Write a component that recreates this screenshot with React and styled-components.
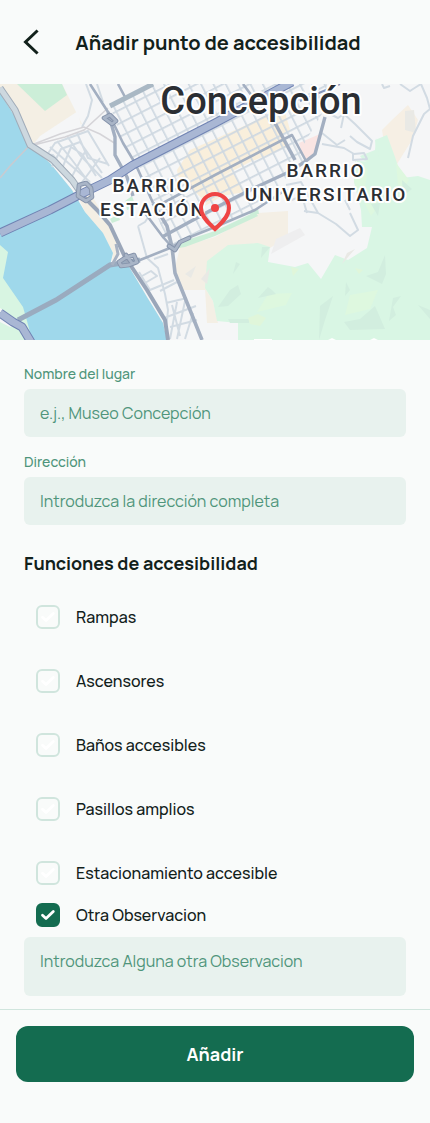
import React from 'react';
import styled, { createGlobalStyle } from 'styled-components';

const GlobalStyle = createGlobalStyle`
  *, *::before, *::after { box-sizing: border-box; }
  body {
    margin: 0;
    background: #f9fbfa;
    color: #12211b;
    font-family: Manrope, Inter, "Liberation Sans", sans-serif;
  }
`;

const Page = styled.form`
  display: flex;
  flex-direction: column;
  min-height: 100vh;
`;

const Header = styled.header`
  display: grid;
  grid-template-columns: 40px 1fr 40px;
  align-items: center;
  height: 84px;
  padding: 2px 6px 0 12px;
`;

const BackButton = styled.button`
  display: grid;
  place-items: center;
  width: 40px;
  height: 40px;
  padding: 0;
  border: 0;
  background: none;
  color: inherit;
`;

const Title = styled.h1`
  margin: 0;
  font-size: 20px;
  line-height: 28px;
  font-weight: 700;
  text-align: center;
  white-space: nowrap;
`;

const MapArea = styled.section`
  position: relative;
  height: 256px;
  overflow: hidden;
`;

const MapDrawing = styled.svg`
  display: block;
  width: 100%;
  height: 100%;
`;

const Pin = styled.svg`
  position: absolute;
  inset: 0;
  margin: auto;
`;

const MapText = styled.text`
  font-family: Roboto, sans-serif;
  font-size: ${(p) => (p.$city ? 38 : 19)}px;
  font-weight: 500;
  letter-spacing: ${(p) => (p.$city ? 0 : 2)}px;
  text-anchor: middle;
  fill: #2b2e33;
  stroke: #ffffff;
  stroke-width: 4px;
  stroke-linejoin: round;
  paint-order: stroke;
`;

const Content = styled.main`
  display: flex;
  flex-direction: column;
  padding: 24px 24px 13px;
`;

const Fields = styled.div`
  display: flex;
  flex-direction: column;
  gap: 15px;
`;

const Field = styled.div`
  display: flex;
  flex-direction: column;
  gap: 5px;
`;

const FieldLabel = styled.label`
  font-size: 14px;
  line-height: 20px;
  color: #4f957b;
  font-weight: 500;
`;

const TextInput = styled.input`
  width: 100%;
  height: 48px;
  padding: 0 16px;
  border: 0;
  border-radius: 6px;
  background: #e8f2ee;
  color: #12211b;
  font: inherit;
  font-size: 16px;
  font-weight: 400;
  &::placeholder { color: #4f957b; opacity: 1; }
`;

const NoteInput = styled(TextInput)`
  display: block;
  height: 59px;
  margin-top: 10px;
  padding: 12px 16px;
  line-height: 24px;
  resize: none;
`;

const SectionTitle = styled.h2`
  margin: 24px 0 28px;
  font-size: 18px;
  line-height: 28px;
  font-weight: 700;
`;

const Options = styled.div`
  display: flex;
  flex-direction: column;
  gap: 40px;
  margin-bottom: 18px;
`;

const Option = styled.label`
  display: flex;
  align-items: center;
  gap: 16px;
  padding: 0 12px;
  font-size: 16px;
  line-height: 24px;
  font-weight: 500;
`;

const CheckFrame = styled.span`
  display: grid;
  width: 24px;
  height: 24px;
  > * { grid-area: 1 / 1; }
`;

const CheckInput = styled.input`
  appearance: none;
  width: 24px;
  height: 24px;
  margin: 0;
  border: 2px solid #d0e5dd;
  border-radius: 6px;
  &:checked { background: #146c50; border-color: #146c50; }
`;

const CheckMark = styled.svg`
  pointer-events: none;
  z-index: 1;
`;

const Footer = styled.footer`
  padding: 16px;
  border-top: 1px solid #d0e5dd;
`;

const SubmitButton = styled.button`
  display: block;
  width: 100%;
  height: 56px;
  border: 0;
  border-radius: 12px;
  background: #146c50;
  color: #ffffff;
  font: inherit;
  font-size: 18px;
  font-weight: 700;
`;

const features = ['Rampas', 'Ascensores', 'Baños accesibles', 'Pasillos amplios', 'Estacionamiento accesible'];

function CheckOption({ label, checked }) {
  return (
    <Option>
      <CheckFrame>
        <CheckInput type="checkbox" defaultChecked={checked} />
        <CheckMark width="24" height="24" viewBox="0 0 24 24" fill="none" aria-hidden="true">
          <path d="M6.5 12.3 10 15.5 17.3 8.4" stroke="#fff" strokeWidth="2.8" strokeLinecap="round" strokeLinejoin="round" />
        </CheckMark>
      </CheckFrame>
      {label}
    </Option>
  );
}

function CityMap() {
  return (
    <MapDrawing viewBox="0 0 430 256" preserveAspectRatio="xMidYMid slice" role="img" aria-label="Mapa de Concepción">
      <defs>
        <pattern id="blocks" width="11" height="12" patternUnits="userSpaceOnUse" patternTransform="translate(4 3) rotate(-27)">
          <path d="M0 0H11M0 0V12" stroke="#ced8e1" strokeWidth="3.4" />
        </pattern>
      </defs>
      <rect width="430" height="256" fill="#f5f6f7" />

      {/* river, banks and parks */}
      <path d="M0 0H62L82 40 62 47 40 55 32 64 50 79 72 106 85 128 103 149 113 169 110 181 128 181 147 213 163 239 167 256H0Z" fill="#f4efe4" />
      <path d="M78 27 81 42 122 60 127 90 110 96 82 110 72 96 53 76 32 62 40 52Z" fill="#f5f6f7" />
      <path d="M84 105 92 112 116 152 119 170 112 181 113 169 103 149 85 128 78 112Z" fill="#f4efe4" />
      <path d="M17 0H62L67 11 45 27Z" fill="#cceed8" />
      <path d="M0 9 17 36 32 64 50 79 72 106 85 128 103 149 113 169 110 181 128 181 147 213 163 239 167 256H0Z" fill="#9fd8eb" />
      <path d="M0 161 8 168 3 194 23 223 27 237 32 256H0Z" fill="#d8f5e2" />
      <path d="M0 224 22 239 10 243 0 238Z" fill="#f5f6f7" />
      <path d="M177 86 190 66 215 55 255 37 262 33 285 28 290 46 281 52 287 63 250 78 215 96 208 120 178 92Z" fill="#f9efdc" />
      <path d="M215 96 232 88 245 108 222 112 205 122Z" fill="#f9efdc" />
      <path d="M299 59 320 50 315 72 304 76Z" fill="#fae5e3" />
      <path d="M180 163 215 153 258 129 288 127 288 153 270 164 228 165 207 206 182 206 174 188Z" fill="#f4efe5" />
      <path d="M205 204 213 217 218 239 207 239Z" fill="#f4efe5" />
      <path d="M382 46 392 36 408 21 418 36 412 56 397 80 387 76Z" fill="#f6efe4" />
      <path d="M125 117 132 112 136 123 127 126ZM110 135 118 130 120 136 112 139ZM172 165 190 155 215 147 255 128 258 132 215 152 185 163ZM246 130 258 124 259 130Z" fill="#cceed8" />
      <path d="M207 177 228 161 258 159 270 163 268 178 295 183 308 179 321 195 335 171 348 176 367 164 372 143 362 143 361 126 354 98 357 77 378 78 375 56 387 51 395 73 402 94 418 92 430 96V256H238V239L217 237 213 217 205 204Z" fill="#d9f6e4" />
      <path d="M376 54 381 85 363 76 360 72 375 66Z" fill="#d9f6e4" />
      <path d="M276 155 300 144 305 151 271 170Z" fill="#eeeeef" />
      <path d="M355 77 368 85 365 103 382 117 371 132 354 98ZM396 79 409 96 399 112ZM268 210 292 209 286 221 257 228ZM350 211 378 206 370 225 345 231Z" fill="#def8df" />
      <path d="M238 201 241 210 228 222 218 223 230 206ZM320 222 333 212 325 236 319 256ZM375 222 385 245 350 246 344 238 360 235ZM385 171 386 190 382 200 366 192 378 188ZM401 212 393 223 396 231 389 237 393 214ZM272 206 276 210 258 214 268 203ZM236 178 240 180 233 190ZM262 163 270 163 261 174ZM346 198 350 206 345 212ZM228 235 249 235 249 239 230 239ZM402 96 412 105 403 112ZM418 221 430 226V235ZM371 120 380 119 378 132Z" fill="#d2eedf" />
      <path d="M185 190 196 182 191 194ZM201 195 210 184 207 200ZM355 165 342 180 347 169ZM405 27 414 26 416 49 405 46Z" fill="#e9e9e5" />
      <path d="M248 234 258 230 266 234 260 242 250 240ZM291 183 299 185 293 192ZM355 184 363 186 359 190Z" fill="#e0f6da" />

      {/* street blocks */}
      <path d="M110 22 153 0H327L323 28 304 60 299 59 304 76 287 93 255 126 215 143 190 153 172 164 164 151 153 119 139 82 123 59Z" fill="url(#blocks)" />
      <g fill="none" stroke="#d2dbe3" strokeWidth="2" strokeLinejoin="round">
        <path d="M45 74 55 59 88 47 109 82M52 83 61 65 80 58 102 89M61 87 71 63 82 70 96 92M69 98 86 66M77 105 100 74M50 63 90 98M57 57 72 76 91 101M43 70 53 71 79 104M67 52 80 71 102 94M77 49 88 74 108 80" />
        <path d="M86 0 92 16 88 32 82 43M97 0 103 18" />
        <path d="M138 142 147 174 158 184 165 210 168 226 166 246M139 188 150 206 174 196M142 192 151 187 157 192 145 199M138 142 145 138 151 129M154 175 168 170M160 207 177 198M166 219 187 214M164 234 196 222M170 243 197 236M177 218 170 255M185 217 177 255M193 229 185 255M172 221 180 252" />
        <path d="M304 127 318 129 336 140 350 152 358 146 350 129M350 126 345 116M322 60 344 64 354 70 364 69 367 75 353 76 353 69M341 44 344 30 355 40 372 57 370 65 357 58 350 52M328 29 338 34 344 30M322 49 337 61 345 56M382 0 384 4 390 2M400 0 410 7 413 5 421 0 427 14 430 25 424 30 413 52 408 74" />
        <path d="M286 101 301 98 308 111 318 129M289 117 302 112 307 129" />
      </g>
      <path d="M34 60 60 50 84 43 100 50 116 60M34 61 65 53 84 46 108 24" fill="none" stroke="#d5d4d8" strokeWidth="1.5" />
      <path d="M0 94 10 82 30 61" fill="none" stroke="#c8cbd1" strokeWidth="1.6" />

      {/* avenues */}
      <g fill="none" stroke="#a3afc1" strokeWidth="2.6" strokeLinejoin="round">
        <path d="M90 0 108 28 123 59 135 79 153 119M145 129 163 153 172 163" />
        <path d="M153 119 167 142 172 163 175 189 190 226 202 256" strokeWidth="3.6" />
        <path d="M108 28 115 53 115 71 127 93 133 112" strokeWidth="3.4" />
        <path d="M118 0 125 13M243 0 252 12" />
        <path d="M110 22 153 0" stroke="#a9b8c4" strokeWidth="5" />
        <path d="M163 119 215 91 292 51 306 77" />
        <path d="M275 39 295 76" strokeWidth="3.6" />
        <path d="M162 153 215 124 254 104 289 88 306 77 315 70 325 33" strokeWidth="3.4" />
        <path d="M128 179 140 176 170 164 190 153 215 143 255 126 287 105" />
      </g>
      <path d="M18 236 56 216 110 181 140 176" fill="none" stroke="#9aabbf" strokeWidth="5" />
      <path d="M72 96 82 111 97 126 110 141 125 173 147 206 165 236 168 256" fill="none" stroke="#9aa6b9" strokeWidth="4" strokeLinejoin="round" />
      <path d="M0 4 15 26 30 61 53 76 72 96 79 106" fill="none" stroke="#a0acb9" strokeWidth="7" strokeLinejoin="round" />
      <path d="M0 4 15 26 30 61 53 76 72 96 79 106" fill="none" stroke="#cdd8df" strokeWidth="5" strokeLinejoin="round" />
      <path d="M116 160 118 170 112 181" fill="none" stroke="#a7b2c3" strokeWidth="3" />

      {/* highways */}
      <g fill="none" strokeLinejoin="round">
        <path d="M0 149 50 126 83 109 110 96 133 81 215 39 292-2M0 229 13 238 22 243 31 258" stroke="#7083b3" strokeWidth="9" />
        <path d="M0 149 50 126 83 109 110 96 133 81 215 39 292-2M0 229 13 238 22 243 31 258" stroke="#a9b7d4" strokeWidth="7" />
        <path d="M300 17 340 0" stroke="#8798bd" strokeWidth="2" />
      </g>
      <g fill="none" stroke="#8492aa" strokeLinejoin="round" strokeLinecap="round">
        <path d="M79 101 86 99 91 104 92 113 86 117 78 112ZM104 34 110 31 116 37 112 40ZM119 178 125 174 134 171 137 178 129 181 121 182ZM126 171 132 179M169 162 175 166 180 158 189 154" strokeWidth="4.6" />
        <path d="M79 101 86 99 91 104 92 113 86 117 78 112ZM104 34 110 31 116 37 112 40ZM119 178 125 174 134 171 137 178 129 181 121 182ZM126 171 132 179M169 162 175 166 180 158 189 154" stroke="#a9b5c7" strokeWidth="2.8" />
      </g>
      <path d="M254 256V255H272V256ZM328 256 332 254 336 256ZM370 256 374 254 378 256Z" fill="#fff" />

      <MapText $city x="261" y="30">Concepción</MapText>
      <MapText x="152" y="108">BARRIO</MapText>
      <MapText x="153" y="132">ESTACIÓN</MapText>
      <MapText x="326" y="93">BARRIO</MapText>
      <MapText x="326" y="117">UNIVERSITARIO</MapText>
    </MapDrawing>
  );
}

export default function App() {
  return (
    <>
      <GlobalStyle />
      <Page onSubmit={(event) => event.preventDefault()}>
        <Header>
          <BackButton type="button" aria-label="Volver">
            <svg width="24" height="28" viewBox="0 0 24 28" fill="none" aria-hidden="true">
              <path d="M16.5 2.5 5.5 13 16.5 23.5" stroke="currentColor" strokeWidth="3" strokeLinecap="square" strokeLinejoin="miter" />
            </svg>
          </BackButton>
          <Title>Añadir punto de accesibilidad</Title>
        </Header>

        <MapArea>
          <CityMap />
          <Pin width="40" height="40" viewBox="0 0 40 40" fill="none" aria-hidden="true">
            <path d="M20 37C15 32.5 6 25 6 16A14 14 0 0 1 34 16C34 25 25 32.5 20 37Z" stroke="#ef4444" strokeWidth="4" />
            <circle cx="20" cy="16" r="4" fill="#ef4444" />
          </Pin>
        </MapArea>

        <Content>
          <Fields>
            <Field>
              <FieldLabel htmlFor="place">Nombre del lugar</FieldLabel>
              <TextInput id="place" type="text" placeholder="e.j., Museo Concepción" />
            </Field>
            <Field>
              <FieldLabel htmlFor="address">Dirección</FieldLabel>
              <TextInput id="address" type="text" placeholder="Introduzca la dirección completa" />
            </Field>
          </Fields>

          <SectionTitle>Funciones de accesibilidad</SectionTitle>
          <Options>
            {features.map((feature) => (
              <CheckOption key={feature} label={feature} />
            ))}
          </Options>
          <CheckOption label="Otra Observacion" checked />
          <NoteInput as="textarea" aria-label="Otra Observacion" placeholder="Introduzca Alguna otra Observacion" />
        </Content>

        <Footer>
          <SubmitButton type="submit">Añadir</SubmitButton>
        </Footer>
      </Page>
    </>
  );
}
